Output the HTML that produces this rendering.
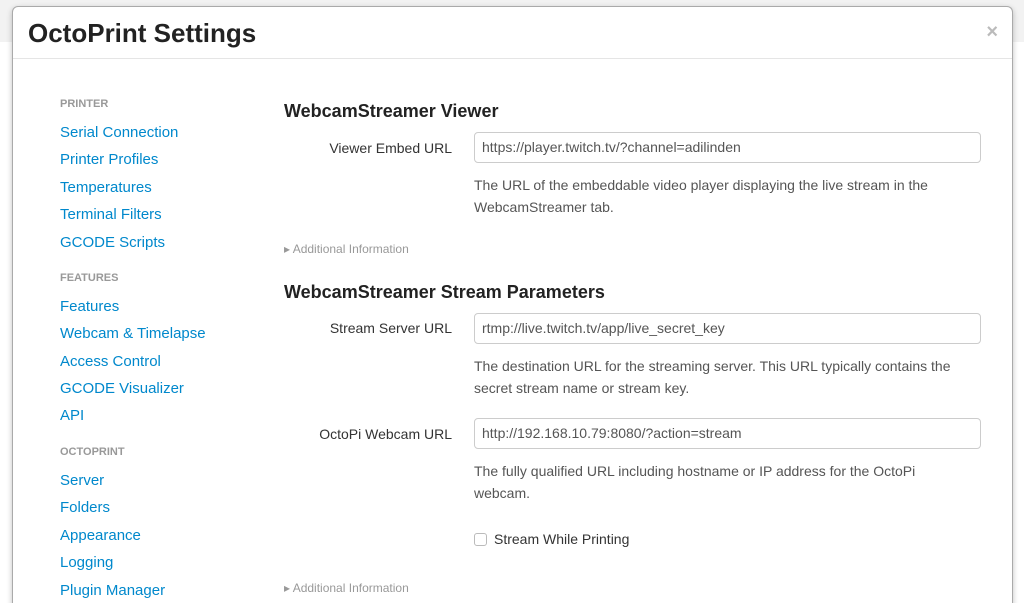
<!DOCTYPE html>
<html><head><style>
html,body{margin:0;width:1024px;height:603px;overflow:hidden}
body{background:#fff;font-family:"Liberation Sans",sans-serif;position:relative}
.bg{position:absolute;left:0;top:0;width:1024px;height:42px;background:#f2f2f2}
.modal{position:absolute;left:12px;top:6px;width:999px;height:610px;background:#fff;border:1px solid #aaa;border-bottom:none;border-radius:6px 6px 0 0;box-shadow:0 2px 6px rgba(0,0,0,.25);overflow:hidden}
.t{position:absolute;white-space:nowrap}
h1{position:absolute;left:15px;top:11px;margin:0;font-size:26px;font-weight:bold;color:#222}
.x{position:absolute;right:14px;top:14px;font-size:20px;color:#bbb;font-weight:bold}
.sep{position:absolute;left:0;right:0;top:51px;border-top:1px solid #e5e5e5}
.nh{position:absolute;left:47px;font-size:11px;font-weight:bold;color:#999}
.nl{position:absolute;left:47px;font-size:15px;color:#0088cc}
.h2{position:absolute;left:271px;font-size:18px;font-weight:bold;color:#222}
.lbl{position:absolute;right:560px;font-size:14px;color:#333;text-align:right}
.inp{position:absolute;left:461px;width:498px;height:29px;border:1px solid #ccc;border-radius:4px;font-size:14px;color:#555;line-height:29px;padding-left:7px}
.hlp{position:absolute;left:461px;font-size:14px;color:#555;line-height:22px;width:500px}
.ai{position:absolute;left:271px;font-size:12px;color:#999}
</style></head><body>
<div class="bg"></div>
<div class="modal">
<h1>OctoPrint Settings</h1><div class="x">×</div><div class="sep"></div>
<div class="nh" style="top:91px">PRINTER</div>
<div class="nl" style="top:117px">Serial Connection</div>
<div class="nl" style="top:144px">Printer Profiles</div>
<div class="nl" style="top:172px">Temperatures</div>
<div class="nl" style="top:199px">Terminal Filters</div>
<div class="nl" style="top:227px">GCODE Scripts</div>
<div class="nh" style="top:265px">FEATURES</div>
<div class="nl" style="top:291px">Features</div>
<div class="nl" style="top:318px">Webcam &amp; Timelapse</div>
<div class="nl" style="top:346px">Access Control</div>
<div class="nl" style="top:373px">GCODE Visualizer</div>
<div class="nl" style="top:400px">API</div>
<div class="nh" style="top:439px">OCTOPRINT</div>
<div class="nl" style="top:465px">Server</div>
<div class="nl" style="top:492px">Folders</div>
<div class="nl" style="top:520px">Appearance</div>
<div class="nl" style="top:547px">Logging</div>
<div class="nl" style="top:575px">Plugin Manager</div>

<div class="h2" style="top:94px">WebcamStreamer Viewer</div>
<div class="lbl" style="top:133px">Viewer Embed URL</div>
<div class="inp" style="top:125px">https://player.twitch.tv/?channel=adilinden</div>
<div class="hlp" style="top:167px">The URL of the embeddable video player displaying the live stream in the WebcamStreamer tab.</div>
<div class="ai" style="top:235px">▸ Additional Information</div>

<div class="h2" style="top:275px">WebcamStreamer Stream Parameters</div>
<div class="lbl" style="top:313px">Stream Server URL</div>
<div class="inp" style="top:306px">rtmp://live.twitch.tv/app/live_secret_key</div>
<div class="hlp" style="top:348px">The destination URL for the streaming server. This URL typically contains the secret stream name or stream key.</div>
<div class="lbl" style="top:419px">OctoPi Webcam URL</div>
<div class="inp" style="top:411px">http://192.168.10.79:8080/?action=stream</div>
<div class="hlp" style="top:453px">The fully qualified URL including hostname or IP address for the OctoPi webcam.</div>
<div style="position:absolute;left:461px;top:526px;width:11px;height:11px;border:1px solid #bbb;border-radius:3px"></div>
<div class="t" style="left:481px;top:524px;font-size:14px;color:#333">Stream While Printing</div>
<div class="ai" style="top:574px">▸ Additional Information</div>
</div>
</body></html>
